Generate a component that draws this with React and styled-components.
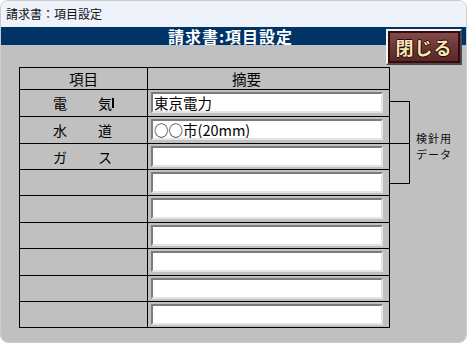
import React from "react";
import styled, { createGlobalStyle } from "styled-components";

const FONT = `"Noto Sans CJK JP", "DejaVu Sans", sans-serif`;

const items = [
  { name: ["電", "気"], note: "東京電力", height: 27, caret: true },
  { name: ["水", "道"], note: "○○市(20mm)", height: 27 },
  { name: ["ガ", "ス"], note: "", height: 26 },
  { height: 26 },
  { height: 27 },
  { height: 26 },
  { height: 27 },
  { height: 26 },
  { height: 26 },
];

const GlobalStyle = createGlobalStyle`
  html, body {
    margin: 0;
    padding: 0;
    background: #fff;
  }

  * {
    box-sizing: border-box;
  }
`;

const App = () => (
  <>
    <GlobalStyle />
    <Window>
      <TitleBar>請求書：項目設定</TitleBar>
      <Banner>請求書:項目設定</Banner>
      <CloseButton type="button">閉じる</CloseButton>

      <Body>
        <Table>
          <HeaderCell>項目</HeaderCell>
          <HeaderCell shift={44}>摘要</HeaderCell>

          {items.map((item, index) => (
            <React.Fragment key={index}>
              <NameCell h={item.height}>
                {item.name && (
                  <>
                    <span>{item.name[0]}</span>
                    <LastChar caret={item.caret}>{item.name[1]}</LastChar>
                  </>
                )}
              </NameCell>
              <NoteCell h={item.height}>
                <Field defaultValue={item.note || ""} />
              </NoteCell>
            </React.Fragment>
          ))}
        </Table>

        <Bracket>
          <BracketHalf top />
          <BracketHalf />
        </Bracket>

        <BracketLabel>
          <span>検針用</span>
          <span>データ</span>
        </BracketLabel>
      </Body>
    </Window>
  </>
);

const Window = styled.div`
  position: relative;
  width: 467px;
  height: 343px;
  display: flex;
  flex-direction: column;
  border: 1px solid #cbcbcb;
  border-radius: 8px;
  overflow: hidden;
  font-family: ${FONT};
  color: #000;
`;

const TitleBar = styled.div`
  height: 26px;
  flex-shrink: 0;
  padding-left: 5px;
  background: #eef2fa;
  font-size: 12px;
  line-height: 26px;
  color: #111;
`;

const Banner = styled.div`
  height: 18px;
  flex-shrink: 0;
  padding-right: 6px;
  background: #003366;
  color: #fff;
  font-size: 16px;
  font-weight: bold;
  line-height: 18px;
  letter-spacing: 1px;
  text-align: center;
`;

const CloseButton = styled.button`
  position: absolute;
  top: 28px;
  right: 4px;
  width: 76px;
  height: 36px;
  padding: 0;
  border: 2px solid;
  border-color: #f4f4f4 #4a4a4a #4a4a4a #f4f4f4;
  box-shadow: inset 0 0 0 2px #3a0a0a;
  background: linear-gradient(180deg, #844d4e 0%, #6a3536 55%, #582628 100%);
  font-family: ${FONT};
  font-size: 18px;
  font-weight: bold;
  line-height: 30px;
  letter-spacing: 1px;
  color: #f6e6b4;
  text-shadow: -1px 0 #2a0505, 1px 0 #2a0505, 0 -1px #2a0505, 0 1px #2a0505;
  cursor: pointer;
`;

const Body = styled.div`
  flex: 1;
  display: flex;
  align-items: flex-start;
  padding: 22px 0 0 18px;
  background: #c0c0c0;
`;

const Table = styled.div`
  display: grid;
  grid-template-columns: 128px 242px;
  border-left: 1px solid #000;
  border-top: 1px solid #000;
  font-size: 14px;
`;

const Cell = styled.div`
  height: ${({ h }) => h || 22}px;
  border-right: 1px solid #000;
  border-bottom: 1px solid #000;
`;

const HeaderCell = styled(Cell)`
  padding-right: ${({ shift }) => shift || 0}px;
  text-align: center;
  font-size: 14.5px;
  line-height: 21px;
`;

const NameCell = styled(Cell)`
  display: flex;
  align-items: center;
  justify-content: center;
  gap: 31px;
  padding-right: 2px;
  font-size: 14px;
  line-height: 16px;
`;

const LastChar = styled.span`
  position: relative;

  &::after {
    content: "";
    display: ${({ caret }) => (caret ? "block" : "none")};
    position: absolute;
    left: 14px;
    top: 3px;
    width: 2px;
    height: 10px;
    background: #000;
  }
`;

const NoteCell = styled(Cell)`
  padding: 2px 0 0 3px;
`;

const Field = styled.input`
  display: block;
  width: 232px;
  height: 21px;
  margin: 0;
  padding: 0 0 0 1px;
  border: 2px solid;
  border-color: #7c7c7c #e4e4e4 #e4e4e4 #7c7c7c;
  background: #fff;
  font-family: ${FONT};
  font-size: 14.5px;
  line-height: 17px;
  color: #000;
  outline: none;
`;

const Bracket = styled.div`
  width: 20px;
  margin-top: 34px;
  display: flex;
  flex-direction: column;
`;

const BracketHalf = styled.div`
  height: ${({ top }) => (top ? 43 : 40)}px;
  border-right: 1px solid #000;
  border-bottom: 1px solid #000;
  border-top: ${({ top }) => (top ? "1px solid #000" : "none")};
`;

const BracketLabel = styled.div`
  display: flex;
  flex-direction: column;
  margin: 63px 0 0 6px;
  font-size: 11px;
  line-height: 16px;
  letter-spacing: 1px;
  color: #111;

  span {
    display: block;
    height: 16px;
    white-space: nowrap;
  }
`;

export default App;
